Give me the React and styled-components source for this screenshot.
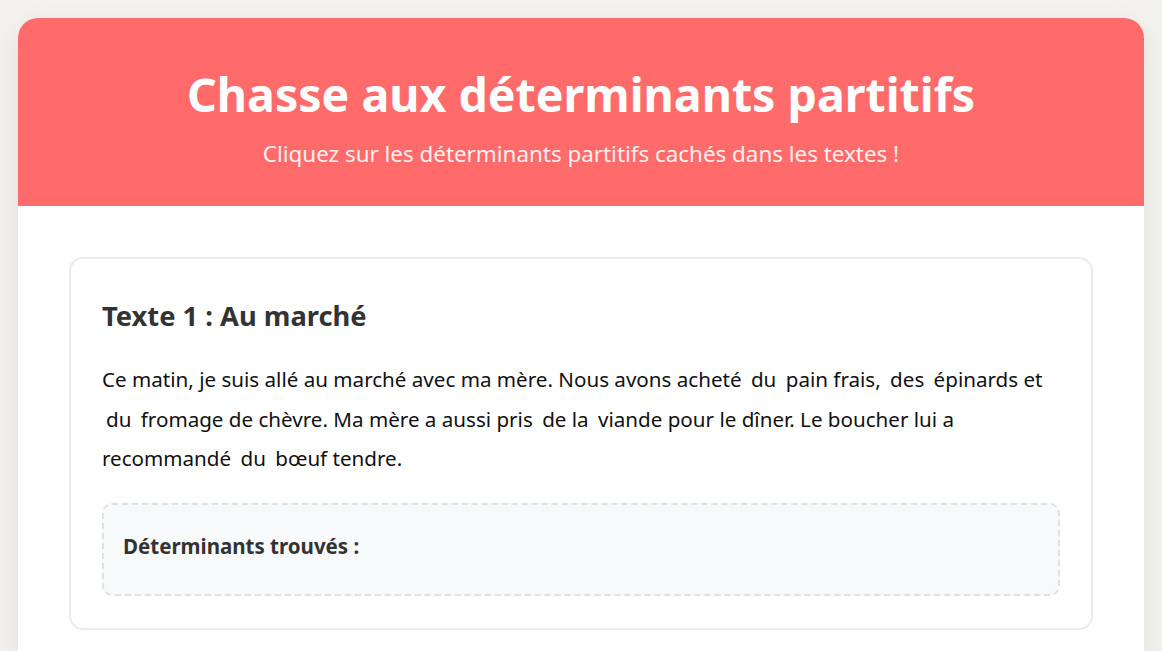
import React, { useState } from "react";
import styled, { createGlobalStyle } from "styled-components";

const GlobalStyle = createGlobalStyle`
  * { box-sizing: border-box; }
  body {
    margin: 0;
    padding: 18px;
    background: #f3f2ef;
    font-family: "Noto Sans", "Open Sans", sans-serif;
    color: #333;
  }
`;

const texts = [
  {
    id: 1,
    title: "Texte 1 : Au marché",
    parts: [
      "Ce matin, je suis allé au marché avec ma mère. Nous avons acheté ",
      { w: "du" },
      " pain frais, ",
      { w: "des" },
      " épinards et ",
      { w: "du" },
      " fromage de chèvre. Ma mère a aussi pris ",
      { w: "de la" },
      " viande pour le dîner. Le boucher lui a recommandé ",
      { w: "du" },
      " bœuf tendre.",
    ],
  },
];

export default function App() {
  const [found, setFound] = useState([]);

  const pick = (key) => {
    if (!found.includes(key)) setFound([...found, key]);
  };

  return (
    <>
      <GlobalStyle />
      <Container>
        <Header>
          <Title>Chasse aux déterminants partitifs</Title>
          <Subtitle>Cliquez sur les déterminants partitifs cachés dans les textes !</Subtitle>
        </Header>
        <Content>
          {texts.map((text) => (
            <Card key={text.id}>
              <CardTitle>{text.title}</CardTitle>
              <Paragraph>
                {text.parts.map((part, i) =>
                  typeof part === "string" ? (
                    <React.Fragment key={i}>{part}</React.Fragment>
                  ) : (
                    <Word
                      key={i}
                      $found={found.includes(`${text.id}-${i}`)}
                      onClick={() => pick(`${text.id}-${i}`)}
                    >
                      {part.w}
                    </Word>
                  )
                )}
              </Paragraph>
              <FoundBox>
                <FoundTitle>Déterminants trouvés :</FoundTitle>
              </FoundBox>
            </Card>
          ))}
        </Content>
      </Container>
    </>
  );
}

const Container = styled.div`
  background: white;
  border-radius: 20px;
  overflow: hidden;
  box-shadow: 0 8px 30px rgba(0, 0, 0, 0.08);
`;

const Header = styled.header`
  background: #ff6b6b;
  color: white;
  text-align: center;
  padding: 46px 20px 0;
  height: 188px;
`;

const Title = styled.h1`
  margin: 0;
  font-size: 46.5px;
  font-weight: 700;
  line-height: 1.3;
`;

const Subtitle = styled.p`
  margin: 14px 0 0;
  font-size: 22.4px;
  opacity: 0.9;
`;

const Content = styled.main`
  padding: 51px 51px;
`;

const Card = styled.section`
  border: 2px solid #e9ecef;
  border-radius: 14px;
  padding: 30px 31px 32px;
`;

const CardTitle = styled.h2`
  margin: 8px 0 26px;
  font-size: 27.3px;
  font-weight: 700;
  color: #333;
`;

const Paragraph = styled.p`
  margin: 0 0 24px;
  font-size: 20.6px;
  line-height: 39.5px;
  color: #111;
`;

const Word = styled.span`
  padding: 0 4px;
  border-radius: 4px;
  cursor: pointer;
  background: ${(p) => (p.$found ? "#51cf66" : "transparent")};
  color: ${(p) => (p.$found ? "white" : "inherit")};
`;

const FoundBox = styled.div`
  background: #f8f9fa;
  border: 2px dashed #dee2e6;
  border-radius: 10px;
  padding: 27px 19px 20px;
  min-height: 93px;
`;

const FoundTitle = styled.div`
  font-size: 20.5px;
  font-weight: 700;
  color: #333;
`;
